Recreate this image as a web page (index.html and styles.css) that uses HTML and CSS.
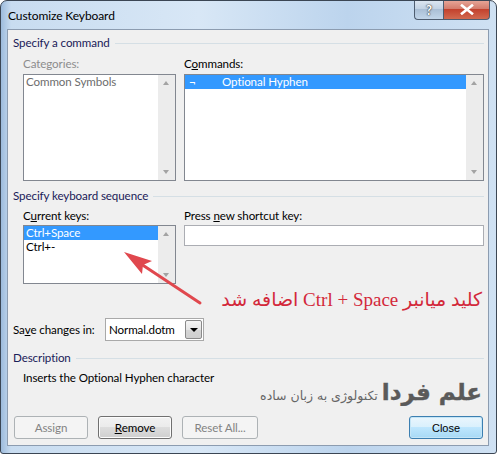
FILE: index.html
```html
<!DOCTYPE html>
<html>
<head>
<meta charset="utf-8">
<link rel="stylesheet" href="styles.css">
</head>
<body>
<div class="window">
  <div class="titlebar">
    <span class="title">Customize Keyboard</span>
    <div class="caption">
      <div class="cbtn help">?</div>
      <div class="cbtn close">
        <svg width="14" height="11" viewBox="0 0 14 11"><path d="M2 1.5 L12 9.5 M12 1.5 L2 9.5" stroke="#fff" stroke-width="2.6" stroke-linecap="square"/></svg>
      </div>
    </div>
  </div>
  <div class="panel">
    <div class="group"><span>Specify a command</span><i class="rule"></i></div>
    <div class="cols top-cols">
      <div class="col left">
        <div class="label disabled">Categories:</div>
        <div class="listbox tall">
          <div class="items"><div class="item dim">Common Symbols</div></div>
          <div class="sbar"><b class="up"></b><b class="down"></b></div>
        </div>
      </div>
      <div class="col right">
        <div class="label">C<u>o</u>mmands:</div>
        <div class="listbox tall">
          <div class="items"><div class="item sel"><span class="not">¬</span>Optional Hyphen</div></div>
          <div class="sbar"><b class="up"></b><b class="down"></b></div>
        </div>
      </div>
    </div>
    <div class="group g2"><span>Specify keyboard sequence</span><i class="rule"></i></div>
    <div class="cols mid-cols">
      <div class="col left">
        <div class="label">C<u>u</u>rrent keys:</div>
        <div class="listbox short">
          <div class="items">
            <div class="item sel">Ctrl+Space</div>
            <div class="item">Ctrl+-</div>
          </div>
          <div class="sbar"><b class="up"></b><b class="down"></b></div>
        </div>
      </div>
      <div class="col right">
        <div class="label">Press <u>n</u>ew shortcut key:</div>
        <div class="input"></div>
      </div>
    </div>
    <div class="save-row">
      <span class="save-label">Sa<u>v</u>e changes in:</span>
      <div class="select"><span>Normal.dotm</span><div class="drop"><b></b></div></div>
    </div>
    <div class="group g3"><span>Description</span><i class="rule"></i></div>
    <div class="desc">Inserts the Optional Hyphen character</div>
    <div class="buttons">
      <div class="btn disabled-btn">Assign</div>
      <div class="btn"><u>R</u>emove</div>
      <div class="btn disabled-btn wide">Reset All...</div>
      <div class="spacer"></div>
      <div class="btn default">Close</div>
    </div>
    <div class="note" dir="rtl">کلید میانبر Ctrl + Space اضافه شد</div>
    <div class="watermark" dir="rtl"><b>علم فردا</b> تکنولوژی به زبان ساده</div>
  </div>
  <svg class="arrow" width="497" height="454" viewBox="0 0 497 454">
    <line x1="200" y1="303" x2="135" y2="260" stroke="#e0484e" stroke-width="3" stroke-linecap="round"/>
    <polygon points="124,252 152,261 143,265 142,274" fill="#e0484e"/>
  </svg>
</div>
</body>
</html>
```

FILE: styles.css
```css
* { box-sizing: border-box; }
html, body { margin: 0; padding: 0; background: #fff; }
body { width: 497px; height: 454px; overflow: hidden; font-family: "Lato", "Liberation Sans", sans-serif; font-size: 11.6px; letter-spacing: -0.1px; color: #000; }

.window {
  position: relative;
  width: 497px; height: 454px;
  border: 1px solid #3b4654;
  border-radius: 7px 7px 3px 3px;
  background: linear-gradient(to right, #9dbbdc 0px, #c8dcf0 10px, #d8e7f6 40%, #bcd4ed 70%, #cfe1f3 100%);
  display: flex; flex-direction: column;
  overflow: hidden;
}
.titlebar { height: 28px; display: flex; align-items: flex-start; position: relative; }
.title { padding: 7px 0 0 7px; line-height: 16px; color: #000; font-size: 12px; }
.caption { margin-left: auto; margin-right: 6px; display: flex; margin-top: -1px; }
.cbtn { height: 20px; border: 1px solid #4e5d70; border-top: none; display: flex; align-items: center; justify-content: center; }
.help { width: 29px; border-radius: 0 0 0 4px; border-right: none; background: linear-gradient(#dfe8f2, #c3d3e4 45%, #aabfd6 50%, #c2d6ea); color: #fff; font-weight: bold; font-size: 13px; text-shadow: 0 0 2px #333, 0 0 1px #222; }
.close { width: 47px; border-radius: 0 0 4px 0; background: linear-gradient(#e9a99b, #d47d6d 45%, #c3422e 50%, #d16a50); }

.panel {
  position: relative;
  margin: 0 7px 7px 6px;
  flex: 1;
  background: #f0f0f0;
  border: 1px solid #8c9cb0;
  padding: 5px 4px 0 5px;
  display: flex; flex-direction: column;
}
.group { display: flex; align-items: center; height: 16px; line-height: 16px; color: #1a2058; gap: 5px; white-space: nowrap; }
.group .rule { flex: 1; height: 1px; background: #d5dfe5; margin-top: 0; }
.g2 { margin-top: 7px; }
.g3 { margin-top: 9px; }

.cols { display: flex; gap: 8px; padding-left: 10px; }
.top-cols { margin-top: 5px; }
.mid-cols { margin-top: 4px; }
.col.left { width: 153px; }
.col.right { width: 300px; }
.label { height: 16px; line-height: 16px; white-space: nowrap; }
.label.disabled { color: #8d8d8d; }
.top-cols .label { margin-bottom: 2px; }
.mid-cols .label { margin-bottom: 1px; }

.listbox { border: 1px solid #828790; background: #fff; display: flex; }
.listbox.tall { height: 107px; }
.listbox.short { height: 59px; }
.items { flex: 1; }
.item { height: 14px; line-height: 14px; padding-left: 2px; white-space: nowrap; }
.item.dim { color: #6d6d6d; padding-left: 2px; }
.item.sel { background: #3399ff; color: #fff; }
.not { display: inline-block; width: 35px; padding-left: 2px; }
.sbar { width: 17px; background: #ececec; position: relative; }
.sbar b { position: absolute; left: 5px; width: 0; height: 0; border-left: 3.5px solid transparent; border-right: 3.5px solid transparent; }
.sbar .up { top: 6px; border-bottom: 4px solid #a3a3a3; }
.sbar .down { bottom: 6px; border-top: 4px solid #a3a3a3; }

.input { height: 21px; border: 1px solid #abadb3; background: #fff; }

.save-row { display: flex; align-items: center; margin-top: 34px; height: 23px; }
.save-label { width: 92px; white-space: nowrap; }
.select { width: 99px; height: 23px; border: 1px solid #a9a9a9; background: #fff; display: flex; align-items: center; padding: 1px; }
.select span { flex: 1; padding-left: 2px; white-space: nowrap; }
.drop { width: 17px; height: 19px; border: 1px solid #8a8a8a; border-radius: 2px; background: linear-gradient(#f5f5f5, #e6e6e6 50%, #d5d5d5 51%, #cfcfcf); position: relative; }
.drop b { position: absolute; left: 4px; top: 7px; border-left: 4px solid transparent; border-right: 4px solid transparent; border-top: 4px solid #000; }

.desc { margin-top: 4px; padding-left: 10px; height: 16px; line-height: 16px; white-space: nowrap; }

.buttons { display: flex; gap: 10px; margin-top: 30px; padding: 0 1px; }
.spacer { flex: 1; }
.btn { width: 74px; height: 23px; border: 1px solid #707070; border-radius: 3px; background: linear-gradient(#f2f2f2, #ebebeb 49%, #dddddd 50%, #cfcfcf); display: flex; align-items: center; justify-content: center; box-shadow: inset 0 0 0 1px #fcfcfc; }
.btn.wide { width: 76px; }
.disabled-btn { border-color: #adb2b5; background: #f4f4f4; color: #838383; box-shadow: none; }
.btn.default { border-color: #3c7fb1; background: linear-gradient(#eaf6fd, #d9f0fc 49%, #bee6fd 50%, #a7d9f5); box-shadow: inset 0 0 0 1px #c4e5f6; font-family: "Liberation Sans", sans-serif; font-size: 11px; letter-spacing: 0; }

.note { position: absolute; right: 6px; top: 258px; font-family: "Liberation Serif", "DejaVu Sans", serif; font-size: 19px; line-height: 24px; color: #d3283a; white-space: nowrap; letter-spacing: 0; }
.watermark { position: absolute; right: 6px; top: 348px; font-family: "DejaVu Sans", sans-serif; font-size: 12.5px; line-height: 28px; color: #666; white-space: nowrap; letter-spacing: 0; }
.watermark b { font-size: 23px; color: #5a5a5a; -webkit-text-stroke: 0.4px #5a5a5a; }

.arrow { position: absolute; left: -1px; top: -1px; pointer-events: none; }
```
